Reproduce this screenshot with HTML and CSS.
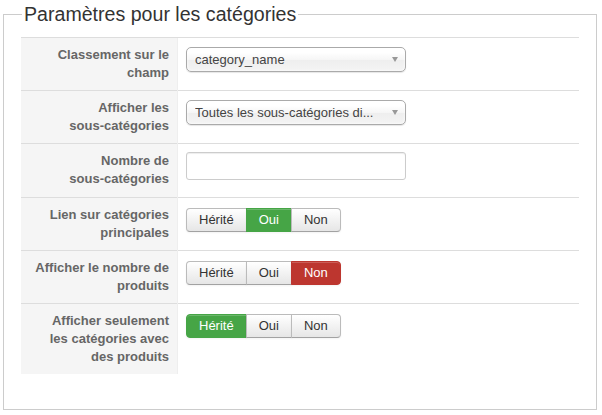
FILE: index.html
```html
<!DOCTYPE html>
<html lang="fr">
<head>
    <meta charset="UTF-8">
    <meta name="viewport" content="width=device-width, initial-scale=1.0">
    <title>Paramètres pour les catégories</title>
    <link rel="stylesheet" href="styles.css">
</head>
<body>
    <fieldset class="params">
        <legend>Paramètres pour les catégories</legend>
        <table class="params-table">
            <tr>
                <th>Classement sur le champ</th>
                <td>
                    <div class="select"><span class="select-text">category_name</span><span class="caret"></span></div>
                </td>
            </tr>
            <tr>
                <th>Afficher les <span class="nowrap">sous-catégories</span></th>
                <td>
                    <div class="select"><span class="select-text">Toutes les sous-catégories di...</span><span class="caret"></span></div>
                </td>
            </tr>
            <tr>
                <th>Nombre de <span class="nowrap">sous-catégories</span></th>
                <td><input type="text" class="text-input"></td>
            </tr>
            <tr>
                <th>Lien sur catégories principales</th>
                <td>
                    <div class="btn-group">
                        <button class="btn">Hérité</button>
                        <button class="btn btn-success">Oui</button>
                        <button class="btn">Non</button>
                    </div>
                </td>
            </tr>
            <tr>
                <th>Afficher le nombre de produits</th>
                <td>
                    <div class="btn-group">
                        <button class="btn">Hérité</button>
                        <button class="btn">Oui</button>
                        <button class="btn btn-danger">Non</button>
                    </div>
                </td>
            </tr>
            <tr>
                <th>Afficher seulement les catégories avec des produits</th>
                <td>
                    <div class="btn-group">
                        <button class="btn btn-success">Hérité</button>
                        <button class="btn">Oui</button>
                        <button class="btn">Non</button>
                    </div>
                </td>
            </tr>
        </table>
    </fieldset>
</body>
</html>
```

FILE: styles.css
```css
body {
    margin: 0;
    padding: 0 5px 0 3px;
    font-family: "Liberation Sans", Arial, sans-serif;
    font-size: 13px;
    color: #333;
    background-color: #fff;
}

.params {
    margin: 0;
    padding: 9px 17px 35px;
    border: 1px solid #ccc;
    min-width: 0;
}

.params legend {
    margin-left: 1px;
    padding: 0 2px;
    font-size: 19.6px;
    line-height: 28px;
    color: #333;
}

.params-table {
    width: 100%;
    border-collapse: collapse;
}

.params-table th,
.params-table td {
    padding: 8px 8px 8.2px;
    line-height: 18px;
    vertical-align: top;
    border-top: 1px solid #ddd;
}

.params-table th {
    width: 134px;
    padding-left: 14px;
    text-align: right;
    font-weight: bold;
    color: #666;
    background-color: #f5f5f5;
}

.params-table td {
    border-left: 1px solid #eee;
}

.nowrap {
    white-space: nowrap;
}

/* liste déroulante */
.select {
    display: flex;
    align-items: center;
    justify-content: space-between;
    box-sizing: border-box;
    width: 220px;
    height: 25px;
    margin-top: 1px;
    padding: 0 7px 0 8px;
    border: 1px solid #aaa;
    border-radius: 5px;
    background: linear-gradient(#fff 20%, #f6f6f6 50%, #eee 52%, #f4f4f4 100%);
    box-shadow: 0 0 3px #fff inset, 0 1px 1px rgba(0, 0, 0, 0.1);
    color: #444;
}

.select-text {
    white-space: nowrap;
    overflow: hidden;
}

.caret {
    width: 0;
    height: 0;
    border-left: 3px solid transparent;
    border-right: 3px solid transparent;
    border-top: 5px solid #999;
    margin-left: 6px;
}

.text-input {
    box-sizing: border-box;
    width: 220px;
    height: 28px;
    margin: 0;
    padding: 4px 6px;
    border: 1px solid #ccc;
    border-radius: 3px;
    box-shadow: inset 0 1px 1px rgba(0, 0, 0, 0.075);
    font: inherit;
    display: block;
}

/* boutons oui / non */
.btn-group {
    display: flex;
    margin-top: 2px;
}

.btn {
    height: 24px;
    margin: 0 0 0 -1px;
    padding: 0 12px;
    font-family: inherit;
    font-size: 13px;
    color: #333;
    border: 1px solid #bbb;
    border-bottom-color: #a2a2a2;
    background: linear-gradient(#fff, #e6e6e6);
    box-shadow: inset 0 1px 0 rgba(255, 255, 255, 0.2), 0 1px 2px rgba(0, 0, 0, 0.05);
    cursor: pointer;
}

.btn:first-child {
    margin-left: 0;
    border-radius: 4px 0 0 4px;
}

.btn:last-child {
    border-radius: 0 4px 4px 0;
}

.btn-success {
    color: #fff;
    background: #46a546;
    border-color: #46a546;
}

.btn-danger {
    color: #fff;
    background: #bd362f;
    border-color: #bd362f;
}
```
